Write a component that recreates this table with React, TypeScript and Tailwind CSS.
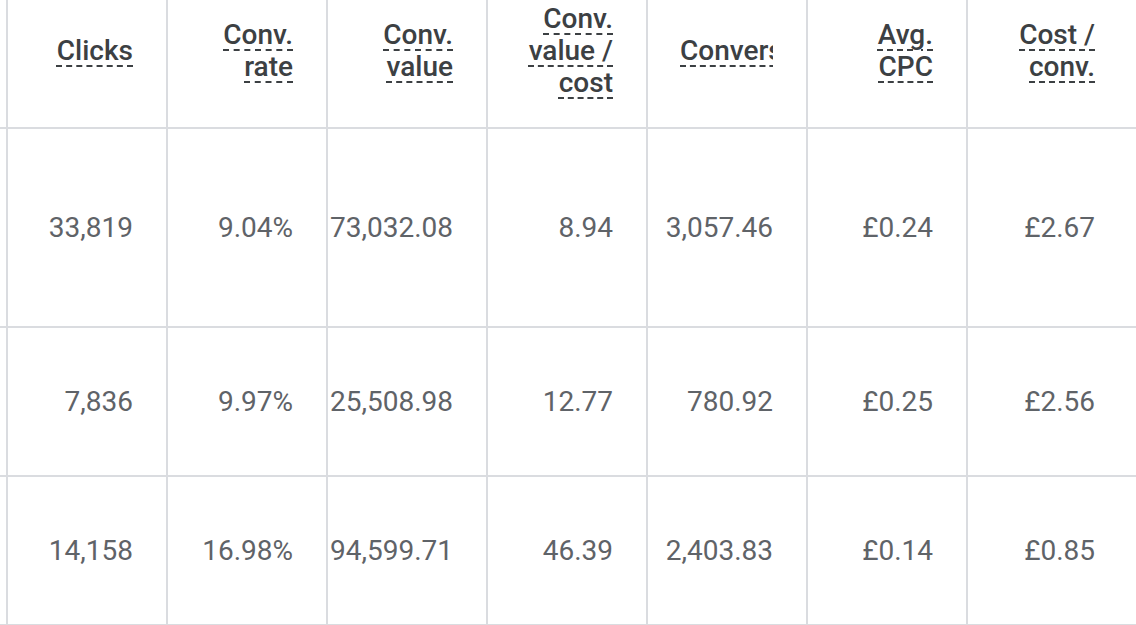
import React from 'react';

const headers: string[] = [
  'Clicks',
  'Conv. rate',
  'Conv. value',
  'Conv. value / cost',
  'Conversions',
  'Avg. CPC',
  'Cost / conv.',
];

const rows: { values: string[]; height: string }[] = [
  { values: ['33,819', '9.04%', '73,032.08', '8.94', '3,057.46', '£0.24', '£2.67'], height: 'h-[199px]' },
  { values: ['7,836', '9.97%', '25,508.98', '12.77', '780.92', '£0.25', '£2.56'], height: 'h-[149px]' },
  { values: ['14,158', '16.98%', '94,599.71', '46.39', '2,403.83', '£0.14', '£0.85'], height: 'h-[149px]' },
];

const HeaderCell: React.FC<{ label: string; last: boolean }> = ({ label, last }) => (
  <div
    className={`h-[129px] border-b-2 border-l-2 border-[#dadce0] pl-[32px] pb-[26px] flex items-center justify-end ${
      last ? 'pr-[41px]' : 'pr-[33px]'
    }`}
  >
    <div className="w-full overflow-hidden whitespace-normal text-right">
      <span
        className={`text-[28px] leading-[32px] font-medium text-[#3c4043] underline decoration-dashed decoration-2 underline-offset-[6px] decoration-[#3c4043] ${
          label === 'Conversions' ? 'whitespace-nowrap' : ''
        }`}
      >
        {label}
      </span>
    </div>
  </div>
);

export default function App() {
  return (
    <div className="w-[1136px] h-[625px] overflow-hidden bg-white font-['Roboto',sans-serif]">
      <div className="grid grid-cols-[6px_repeat(6,160px)_1fr]">
        {/* header */}
        <div className="h-[129px] border-b-2 border-[#dadce0]" />
        {headers.map((h, j) => (
          <HeaderCell key={h} label={h} last={j === headers.length - 1} />
        ))}

        {/* data rows */}
        {rows.map((row, i) => (
          <React.Fragment key={i}>
            <div className={`${row.height} border-b-2 border-[#dadce0]`} />
            {row.values.map((v, j) => (
              <div
                key={j}
                className={`${row.height} border-b-2 border-l-2 border-[#dadce0] pl-[4px] flex items-center justify-end ${
                  j === row.values.length - 1 ? 'pr-[41px]' : 'pr-[33px]'
                }`}
              >
                <span className="text-[28px] leading-[32px] text-[#5f6368] whitespace-nowrap">{v}</span>
              </div>
            ))}
          </React.Fragment>
        ))}
      </div>
    </div>
  );
}
